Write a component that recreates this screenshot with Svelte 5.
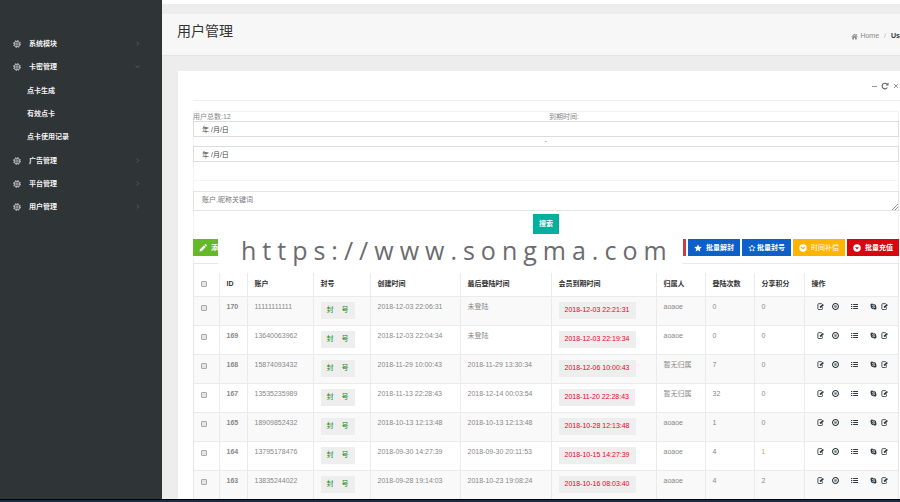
<script>
  const menu = [
    { label: '系统模块', open: false, children: [] },
    { label: '卡密管理', open: true, children: ['点卡生成', '有效点卡', '点卡使用记录'] },
    { label: '广告管理', open: false, children: [] },
    { label: '平台管理', open: false, children: [] },
    { label: '用户管理', open: false, children: [] }
  ];

  const rows = [
    { id: 170, account: '11111111111', created: '2018-12-03 22:06:31', login: '未登陆', expires: '2018-12-03 22:21:31', owner: 'aoaoe', count: 0, points: 0 },
    { id: 169, account: '13640063962', created: '2018-12-03 22:04:34', login: '未登陆', expires: '2018-12-03 22:19:34', owner: 'aoaoe', count: 0, points: 0 },
    { id: 168, account: '15874093432', created: '2018-11-29 10:00:43', login: '2018-11-29 13:30:34', expires: '2018-12-06 10:00:43', owner: '暂无归属', count: 7, points: 0 },
    { id: 167, account: '13535235989', created: '2018-11-13 22:28:43', login: '2018-12-14 00:03:54', expires: '2018-11-20 22:28:43', owner: '暂无归属', count: 32, points: 0 },
    { id: 165, account: '18909852432', created: '2018-10-13 12:13:48', login: '2018-10-13 12:13:48', expires: '2018-10-28 12:13:48', owner: 'aoaoe', count: 1, points: 0 },
    { id: 164, account: '13795178476', created: '2018-09-30 14:27:39', login: '2018-09-30 20:11:53', expires: '2018-10-15 14:27:39', owner: 'aoaoe', count: 4, points: 1 },
    { id: 163, account: '13835244022', created: '2018-09-28 19:14:03', login: '2018-10-23 19:08:24', expires: '2018-10-16 08:03:40', owner: 'aoaoe', count: 4, points: 2 }
  ];

  const heads = ['ID', '账户', '封号', '创建时间', '最后登陆时间', '会员到期时间', '归属人', '登陆次数', '分享积分', '操作'];
</script>

{#snippet gear()}
  <svg class="gear" viewBox="0 0 16 16" aria-hidden="true">
    <circle cx="8" cy="8" r="5.6" fill="none" stroke="currentColor" stroke-width="1.6" />
    <circle cx="8" cy="8" r="7" fill="none" stroke="currentColor" stroke-width="1.6" stroke-dasharray="2.8 2.7" />
    <circle cx="8" cy="8" r="2.1" fill="none" stroke="currentColor" stroke-width="1.4" />
    <path d="M8 2.5v3.4M8 10.1v3.4M2.5 8h3.4M10.1 8h3.4" stroke="currentColor" stroke-width="1" />
  </svg>
{/snippet}

{#snippet edit()}
  <svg viewBox="0 0 16 16" aria-hidden="true">
    <path d="M11 1.500H4Q2 1.500 2 3.500v9.500q0 2 2 2h6.500q2 0 2-2V10" fill="none" stroke="currentColor" stroke-width="2" />
    <path d="M6.500 11.500l.8-3.800L13 2l2.800 2.800L10 10.700z" fill="currentColor" />
  </svg>
{/snippet}

<div class="page">
  <div class="shell">
    <nav class="sidebar" aria-label="主菜单">
      <ul>
        {#each menu as item}
          <li>
            <a class="item" href="#menu">
              {@render gear()}
              <span>{item.label}</span>
              <svg class="chevron" viewBox="0 0 8 8" aria-hidden="true">
                <path d={item.open ? 'M1 2.500l3 3 3-3' : 'M3 1l3 3-3 3'} fill="none" stroke="currentColor" />
              </svg>
            </a>
            {#if item.open}
              <ul class="sub">
                {#each item.children as child}
                  <li><a class="item child" href="#menu">{child}</a></li>
                {/each}
              </ul>
            {/if}
          </li>
        {/each}
      </ul>
    </nav>

    <main>
      <div class="topbar"></div>
      <header>
        <h1>用户管理</h1>
        <div class="crumbs">
          <a href="#home">
            <svg viewBox="0 0 16 16" aria-hidden="true"><path d="M8 1.500L0.500 8.500l1 1L8 3.800l6.500 5.700 1-1L13 6.200V2.500h-2v2zM3 9.500V15h3.800v-4h2.400v4H13V9.500L8 5z" fill="currentColor" /></svg>
            Home</a>
          <span class="slash">/</span>
          <strong>Us</strong>
        </div>
      </header>

      <section class="panel">
        <div class="tools">
          <button aria-label="折叠"><svg viewBox="0 0 8 8"><path d="M2 4.500h5" stroke="currentColor" /></svg></button>
          <button class="dark" aria-label="刷新"><svg viewBox="0 0 8 8"><path d="M6.300 5.500A2.800 2.800 0 1 1 6 2.200" fill="none" stroke="currentColor" stroke-width="1.200" /><path d="M7.500 .6v3H4.500z" fill="currentColor" /></svg></button>
          <button aria-label="关闭"><svg viewBox="0 0 8 8"><path d="M2 2l4 4M6 2l-4 4" stroke="currentColor" /></svg></button>
        </div>

        <form class="search" onsubmit={(e) => e.preventDefault()}>
          <div class="captions">
            <span>用户总数:12</span>
            <label for="from">到期时间:</label>
          </div>
          <input id="from" class="date" type="text" value="年 /月/日" />
          <div class="dash">-</div>
          <input class="date" type="text" value="年 /月/日" aria-label="结束时间" />
          <div class="spacer"></div>
          <div class="keyword">
            <textarea rows="1" placeholder="账户,昵称关键词" aria-label="关键词"></textarea>
            <svg class="grip" viewBox="0 0 6 6" aria-hidden="true"><path d="M0 6L6 0M3 6l3-3" stroke="#777" stroke-width=".8" /></svg>
          </div>
          <div class="submit"><button>搜索</button></div>

          <div class="actions">
            <button type="button" class="green">
              <svg viewBox="0 0 16 16" aria-hidden="true"><path d="M1 15l1-4.500L10 2.500l3.500 3.500-8 8zM11 1.500l1-1q1-.6 2 .3l1.200 1.200q1 1 .2 2l-1 1z" fill="currentColor" /></svg>
              添加</button>
            <span class="fill"></span>
            <button type="button" class="rose" aria-label="删除"></button>
            <button type="button" class="blue">
              <svg viewBox="0 0 16 16" aria-hidden="true"><path d="M8 .8l2.200 4.900 5.300.5-4 3.600 1.200 5.300L8 12.300l-4.700 2.800 1.200-5.300-4-3.600 5.300-.5z" fill="currentColor" /></svg>
              批量解封</button>
            <button type="button" class="blue narrow">
              <svg viewBox="0 0 16 16" aria-hidden="true"><path d="M8 2l1.800 4.200 4.600.4-3.500 3 1.100 4.500L8 11.700l-4 2.400 1.100-4.500-3.500-3 4.600-.4z" fill="none" stroke="currentColor" stroke-width="1.500" /></svg>
              批量封号</button>
            <button type="button" class="amber">
              <svg viewBox="0 0 16 16" aria-hidden="true"><circle cx="8" cy="8" r="7.500" fill="currentColor" /><path d="M4.500 6l3.500 3.500L11.500 6" fill="none" stroke="#ffb400" stroke-width="2.200" /></svg>
              时间补偿</button>
            <button type="button" class="red">
              <svg viewBox="0 0 16 16" aria-hidden="true"><circle cx="8" cy="8" r="7.500" fill="currentColor" /><path d="M4 6.500h8L8 11z" fill="#d7070f" /></svg>
              批量充值</button>
            <div class="banner">https://www.songma.com</div>
          </div>
        </form>

        <div class="grid">
          <table>
            <colgroup>
              <col class="c-check" /><col class="c-id" /><col class="c-account" /><col class="c-ban" />
              <col class="c-time" /><col class="c-login" /><col class="c-expire" />
              <col class="c-num" /><col class="c-num" /><col class="c-points" /><col />
            </colgroup>
            <thead>
              <tr>
                <th><input type="checkbox" aria-label="全选" /></th>
                {#each heads as head}<th>{head}</th>{/each}
              </tr>
            </thead>
            <tbody>
              {#each rows as row}
                <tr>
                  <td><input type="checkbox" aria-label={`选择 ${row.id}`} /></td>
                  <td class="id">{row.id}</td>
                  <td>{row.account}</td>
                  <td><button class="tag ban"><span>封</span><span>号</span></button></td>
                  <td>{row.created}</td>
                  <td>{row.login}</td>
                  <td><button class="tag until">{row.expires}</button></td>
                  <td>{row.owner}</td>
                  <td>{row.count}</td>
                  <td class:warm={row.points === 1}>{row.points}</td>
                  <td>
                    <div class="ops">
                      <a href="#edit" aria-label="编辑">{@render edit()}</a>
                      <a class="second" href="#ban" aria-label="封禁"><svg viewBox="0 0 16 16"><circle cx="8" cy="8" r="6.700" fill="none" stroke="currentColor" stroke-width="2.500" /><path d="M5 5h6v5.500q-3 2-6 0z" fill="currentColor" opacity=".6" /></svg></a>
                      <a class="third" href="#list" aria-label="明细"><svg viewBox="0 0 16 16"><path d="M0 3.500h3M0 8h3M0 12.500h3M5 3.500h11M5 8h11M5 12.500h11" stroke="currentColor" stroke-width="2.500" /></svg></a>
                      <a class="fourth" href="#skype" aria-label="联系"><svg viewBox="0 0 16 16"><path d="M4.500 1q2 0 3 1Q14.500 2 14.300 9q1.300 2 .2 4-2 3-5.500 1.300Q2 14.500 1.800 8 .5 5 1.500 3 2.500 1 4.500 1z" fill="currentColor" /><path d="M11 5.700Q8 3.800 5.800 5.300 5 7.200 8 7.700q3.500.6 2.600 2.500-2.300 2-5.300-.2" fill="none" stroke="#fff" stroke-width="1.500" /></svg></a>
                      <a class="fifth" href="#note" aria-label="备注">{@render edit()}</a>
                    </div>
                  </td>
                </tr>
              {/each}
            </tbody>
          </table>
        </div>
      </section>
    </main>
  </div>
  <footer></footer>
</div>

<style>
  :global(body) {
    margin: 0;
  }
  .page,
  .page * {
    box-sizing: border-box;
  }
  .page {
    display: flex;
    flex-direction: column;
    height: 100vh;
    overflow: hidden;
    background: #ededed;
    color: #888;
    font: 7px/10px 'Liberation Sans', 'Noto Sans CJK SC', sans-serif;
  }
  .page button,
  .page input,
  .page textarea {
    margin: 0;
    font: inherit;
    border-radius: 0;
  }
  a {
    color: inherit;
    text-decoration: none;
  }
  svg {
    display: block;
    width: 7px;
    height: 7px;
    flex: none;
  }
  .shell {
    display: flex;
    flex: 1;
    min-height: 0;
  }

  /* sidebar */
  .sidebar {
    flex: none;
    width: 162px;
    padding-top: 32px;
    background: #2f3437;
    color: #f0f0f0;
    font-weight: bold;
  }
  ul {
    margin: 0;
    padding: 0;
    list-style: none;
  }
  .sub {
    padding: 1px 0;
  }
  .item {
    display: flex;
    align-items: center;
    height: 23px;
    padding: 0 22px 0 13px;
  }
  .item span {
    flex: 1;
  }
  .child {
    padding-left: 27px;
  }
  .gear {
    width: 8px;
    height: 8px;
    margin-right: 8px;
    color: #d0d3d4;
  }
  .chevron {
    width: 5px;
    height: 5px;
    color: #747a7d;
  }

  /* page head */
  main {
    flex: 1;
    min-width: 0;
  }
  .topbar {
    height: 4px;
    background: #fff;
  }
  header {
    display: flex;
    align-items: center;
    justify-content: space-between;
    height: 42px;
    margin-top: 10px;
    padding-left: 15px;
    background: #f7f7f7;
    border-bottom: 1px solid #e4e4e4;
  }
  h1 {
    margin: 0;
    padding-bottom: 8px;
    color: #333;
    font-size: 14px;
    font-weight: normal;
    line-height: 20px;
  }
  .crumbs {
    display: flex;
    gap: 5px;
    padding-top: 3px;
  }
  .crumbs a {
    display: flex;
    gap: 2px;
    align-items: center;
  }
  .crumbs strong {
    color: #333;
  }
  .slash {
    color: #bbb;
  }

  /* panel */
  .panel {
    margin: 15px 0 0 16px;
    padding: 0 1px 0 15px;
    background: #fff;
  }
  .tools {
    display: flex;
    align-items: center;
    justify-content: flex-end;
    gap: 3px;
    height: 30px;
    margin-right: -1px;
    border-bottom: 1px solid #eee;
  }
  .tools button {
    padding: 0;
    border: 0;
    background: none;
    color: #999;
  }
  .tools svg {
    width: 8px;
    height: 8px;
  }
  .tools .dark {
    color: #666;
  }

  /* search form */
  .search {
    margin-top: 10px;
    border-top: 1px solid #f2f2f2;
    box-shadow: inset 1px 0 #f2f2f2, inset -1px 0 #f2f2f2;
  }
  .captions {
    display: grid;
    grid-template-columns: 1fr 1fr;
    height: 9px;
  }
  .captions label {
    padding-left: 3px;
  }
  .date {
    display: block;
    width: 100%;
    height: 16px;
    padding: 0 8px;
    border: 1px solid #ddd;
    background: #fff;
    color: #444;
  }
  .dash {
    height: 9px;
    line-height: 8px;
    text-align: center;
  }
  .spacer {
    height: 19px;
    border-bottom: 1px solid #f5f5f5;
  }
  .keyword {
    position: relative;
    padding-top: 10px;
  }
  textarea {
    display: block;
    width: 100%;
    height: 20px;
    padding: 3px 8px;
    border: 1px solid #e4e4e4;
    resize: none;
    color: #555;
  }
  textarea::placeholder {
    color: #777;
  }
  .grip {
    position: absolute;
    right: 1px;
    bottom: 1px;
    width: 6px;
    height: 6px;
  }
  .submit {
    display: flex;
    justify-content: center;
    padding: 3px 0 5px;
  }
  .submit button {
    height: 20px;
    padding: 0 6px;
    border: 0;
    background: #00b19d;
    color: #fff;
    font-weight: bold;
  }
  .actions {
    position: relative;
    display: flex;
    gap: 2px;
    height: 24px;
  }
  .actions button {
    display: flex;
    align-items: center;
    justify-content: center;
    gap: 4px;
    height: 17px;
    padding: 0 6px;
    border: 0;
    color: #fff;
    font-weight: bold;
  }
  .actions svg {
    width: 8px;
    height: 8px;
  }
  .fill {
    flex: 1;
  }
  .actions .green {
    background: #65b929;
  }
  .actions .rose {
    background: #cf3c46;
  }
  .actions .blue {
    background: #0d5fc9;
  }
  .actions .narrow {
    gap: 1px;
  }
  .actions .amber {
    background: #ffb400;
    font-weight: normal;
  }
  .actions .red {
    background: #d7070f;
  }
  .banner {
    position: absolute;
    top: -1px;
    left: 25px;
    width: 465px;
    height: 26px;
    padding-left: 23px;
    background: #fff;
    color: #6b6c70;
    font: 25px/24px 'Open Sans', 'Noto Sans', sans-serif;
    letter-spacing: 6px;
    white-space: nowrap;
  }

  /* data table */
  .grid {
    padding-top: 9px;
    border: 1px solid #e8e8e8;
    border-width: 1px 1px 0;
  }
  table {
    width: 100%;
    border-collapse: collapse;
    table-layout: fixed;
  }
  .c-check { width: 25px; }
  .c-id { width: 28px; }
  .c-account { width: 66px; }
  .c-ban { width: 57px; }
  .c-time { width: 90px; }
  .c-login { width: 91px; }
  .c-expire { width: 105px; }
  .c-num { width: 49px; }
  .c-points { width: 50px; }
  th,
  td {
    padding: 0 0 0 7px;
    border-left: 1px solid #ebebeb;
    text-align: left;
    white-space: nowrap;
  }
  th:first-child,
  td:first-child {
    border-left: 0;
  }
  th {
    height: 23px;
    color: #333;
  }
  td {
    height: 29px;
    padding-top: 5px;
    border-top: 1px solid #ebebeb;
    vertical-align: top;
  }
  tbody tr:nth-child(odd) {
    background: #f9f9f9;
  }
  .id {
    font-weight: bold;
  }
  .warm {
    color: #e0a060;
  }
  input[type='checkbox'] {
    display: block;
    width: 6px;
    height: 6px;
    appearance: none;
    border: 1px solid #aaa;
    border-radius: 1px;
    background: #e6e6e6;
  }
  td input[type='checkbox'] {
    margin-top: 3px;
  }
  .tag {
    display: flex;
    align-items: center;
    height: 17px;
    padding: 0 6px;
    border: 0;
    background: #eee;
  }
  .ban {
    gap: 8px;
    color: #138a13;
    font-weight: bold;
  }
  .until {
    color: #f00026;
  }
  .ops {
    display: flex;
    align-items: center;
    height: 10px;
    padding-left: 5px;
    color: #2f3a42;
  }
  .second {
    margin-left: 8px;
  }
  .third {
    margin-left: 12px;
  }
  .fourth {
    margin-left: 12px;
  }
  .fifth {
    margin-left: 4px;
  }

  footer {
    flex: none;
    height: 3px;
    border-top: 1px solid #000;
    background: #12304a;
  }
</style>
